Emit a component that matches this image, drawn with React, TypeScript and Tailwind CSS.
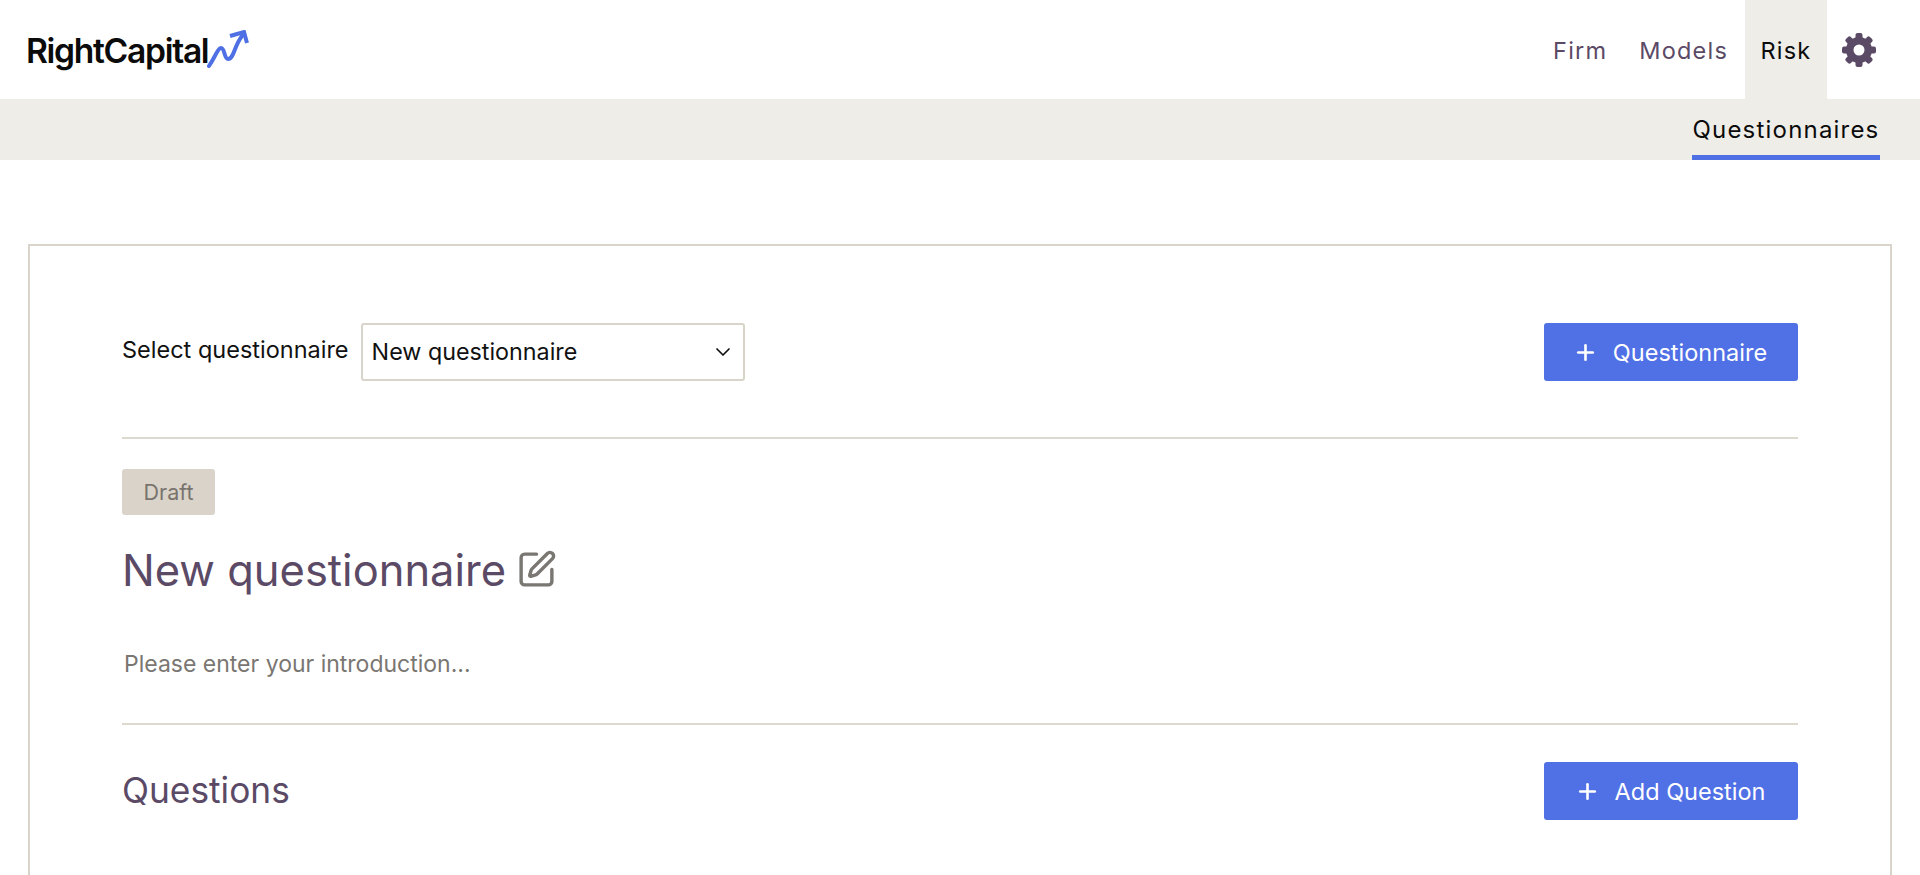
import { ChevronDown, Plus, SquarePen } from 'lucide-react';

const teeth = [0, 45, 90, 135, 180, 225, 270, 315];

function Gear() {
  return (
    <svg width="36" height="36" viewBox="0 0 36 36" fill="#5b4a66">
      {teeth.map((deg) => (
        <rect key={deg} x="14.5" y="1" width="7" height="8" rx="2" transform={`rotate(${deg} 18 18)`} />
      ))}
      <path
        fillRule="evenodd"
        d="M18 5a13 13 0 1 0 0 26a13 13 0 1 0 0-26zM18 12.5a5.5 5.5 0 1 1 0 11a5.5 5.5 0 1 1 0-11z"
      />
    </svg>
  );
}

function Logo() {
  return (
    <div className="flex items-center pt-[2px]">
      <span className="text-[33.6px] font-semibold tracking-[-1.3px] text-[#0b0b0b] leading-none">RightCapital</span>
      <svg width="42" height="40" viewBox="0 0 42 40" fill="none" className="-ml-[1px] -mt-[2px]">
        <path
          d="M2 36 C8 27 11 18 14 18 C18 18 17 29 21 29 C27 29 27 16 35 6"
          stroke="#4f6fe4"
          strokeWidth="4"
          strokeLinecap="round"
        />
        <path d="M23 6 L37 2 L40 13" stroke="#4f6fe4" strokeWidth="4" />
      </svg>
    </div>
  );
}

function BlueButton({ label }: { label: string }) {
  return (
    <button className="flex h-[58px] w-[254px] items-center justify-center gap-[15px] rounded-[3px] bg-[#5070e6] pr-[2px] text-[23.5px] text-white">
      <Plus size={25} strokeWidth={2.5} />
      <span className="pt-[2px]">{label}</span>
    </button>
  );
}

export default function App() {
  return (
    <div className="h-screen overflow-hidden bg-white font-['Inter',sans-serif]">
      <header className="flex h-[99px] items-stretch justify-between bg-white pl-[26px] pr-[43px]">
        <Logo />
        <nav className="flex items-center text-[23.5px] tracking-[1.2px] text-[#5b4a66]">
          <a className="mr-[32px] pt-[3px]">Firm</a>
          <a className="mr-[17px] pt-[3px]">Models</a>
          <a className="flex h-full w-[82px] items-center justify-center bg-[#eeede8] pt-[3px] text-[#0b0b0b]">Risk</a>
          <span className="ml-[14px]">
            <Gear />
          </span>
        </nav>
      </header>
      <div className="flex h-[61px] justify-end bg-[#eeede8] pr-10">
        <a className="flex w-[188px] items-center justify-center border-b-[5px] border-[#4f6fe4] pt-[6px] text-[24px] tracking-[1.2px] text-[#0b0b0b]">
          Questionnaires
        </a>
      </div>
      <main className="px-7 pt-[84px]">
        <section className="h-[900px] border-2 border-[#d9d4c9] px-[92px] pt-[77px]">
          <div className="flex items-start justify-between border-b-2 border-[#ddd9ce] pb-[56px]">
            <div className="flex items-start gap-3">
              <label className="pt-[9px] text-[23.5px] text-[#111]">Select questionnaire</label>
              <div className="flex h-[58px] w-[384px] items-center justify-between rounded-[3px] border-2 border-[#d9d4c9] pl-[9px] pr-[8px] text-[23.3px] text-[#111]">
                <span>New questionnaire</span>
                <ChevronDown size={24} strokeWidth={1.7} />
              </div>
            </div>
            <BlueButton label="Questionnaire" />
          </div>
          <div className="mt-[30px] flex h-[46px] w-[93px] items-center justify-center rounded-[3px] bg-[#d9d3c9] text-[21.5px] text-[#79736e]">
            Draft
          </div>
          <div className="mt-[25px] flex items-center gap-[10px]">
            <h1 className="text-[43.5px] leading-[60px] text-[#5b4a66]">New questionnaire</h1>
            <SquarePen size={41} strokeWidth={2} className="-mt-[2px] text-[#7a7672]" />
          </div>
          <p className="mt-[47px] pl-[2px] text-[23px] leading-[34px] text-[#7a7672]">Please enter your introduction...</p>
          <div className="mt-[42px] flex items-center justify-between border-t-2 border-[#ddd9ce] pt-[37px]">
            <h2 className="text-[35.3px] text-[#5b4a66]">Questions</h2>
            <BlueButton label="Add Question" />
          </div>
        </section>
      </main>
    </div>
  );
}
